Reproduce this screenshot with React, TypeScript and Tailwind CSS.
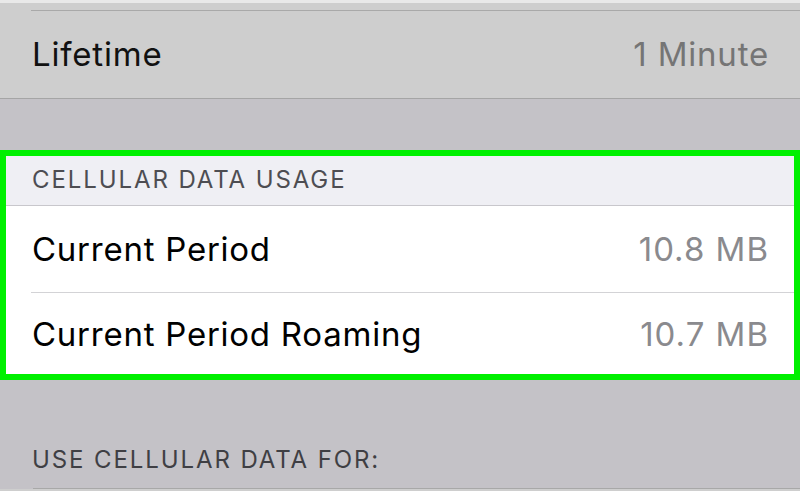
export default function App() {
  const rows = [
    { label: 'Current Period', value: '10.8 MB', h: 'h-[86px] pt-[1px]' },
    { label: 'Current Period Roaming', value: '10.7 MB', h: 'h-[79px] pt-[5px]' },
  ];

  return (
    <div className="w-[800px] h-[491px] overflow-hidden bg-[#c4c2c7] font-['Inter','Liberation_Sans',sans-serif] antialiased">
      {/* dimmed section above */}
      <div className="h-[3px] bg-[#e9e9e9]" />
      <div className="bg-[#cecece] pt-[7px]">
        <div className="ml-[31px] h-px bg-[#a9a9a9]" />
        <div className="h-[87px] flex items-center justify-between pl-[32px] pr-[32px]">
          <span className="text-[33px] text-[#111] tracking-[0.8px]">Lifetime</span>
          <span className="text-[33px] text-[#757575] tracking-[0.8px] mr-[-1px]">1 Minute</span>
        </div>
        <div className="h-px bg-[#a5a5a5]" />
      </div>

      <div className="h-[51px]" />

      {/* highlighted section */}
      <div className="border-[6px] border-[#00f000] h-[230px] flex flex-col bg-white">
        <div className="h-[49px] bg-[#efeff4] pl-[26px] pt-[6px] flex items-start">
          <span className="text-[24px] text-[#4d4d52] tracking-[1.9px] leading-[36px]">CELLULAR DATA USAGE</span>
        </div>
        <div className="h-px bg-[#c8c7cc]" />
        {rows.map((r, i) => (
          <div key={r.label}>
            {i > 0 && <div className="ml-[25px] h-px bg-[#d3d3d6]" />}
            <div className={`${r.h} flex items-center justify-between pl-[26px] pr-[26px]`}>
              <span className="text-[33px] text-black tracking-[0.75px]">{r.label}</span>
              <span className="text-[33px] text-[#8a8a8e] tracking-[1px] mr-[-1px]">{r.value}</span>
            </div>
          </div>
        ))}
      </div>

      {/* next section header */}
      <div className="h-[108px] flex items-end pl-[32px] pb-[16px]">
        <span className="text-[24px] text-[#3f3f44] tracking-[1.9px] leading-none">USE CELLULAR DATA FOR:</span>
      </div>
      <div className="ml-[33px] h-px bg-[#a8a8a8]" />
      <div className="h-[2px] bg-[#cecece]" />
    </div>
  );
}
